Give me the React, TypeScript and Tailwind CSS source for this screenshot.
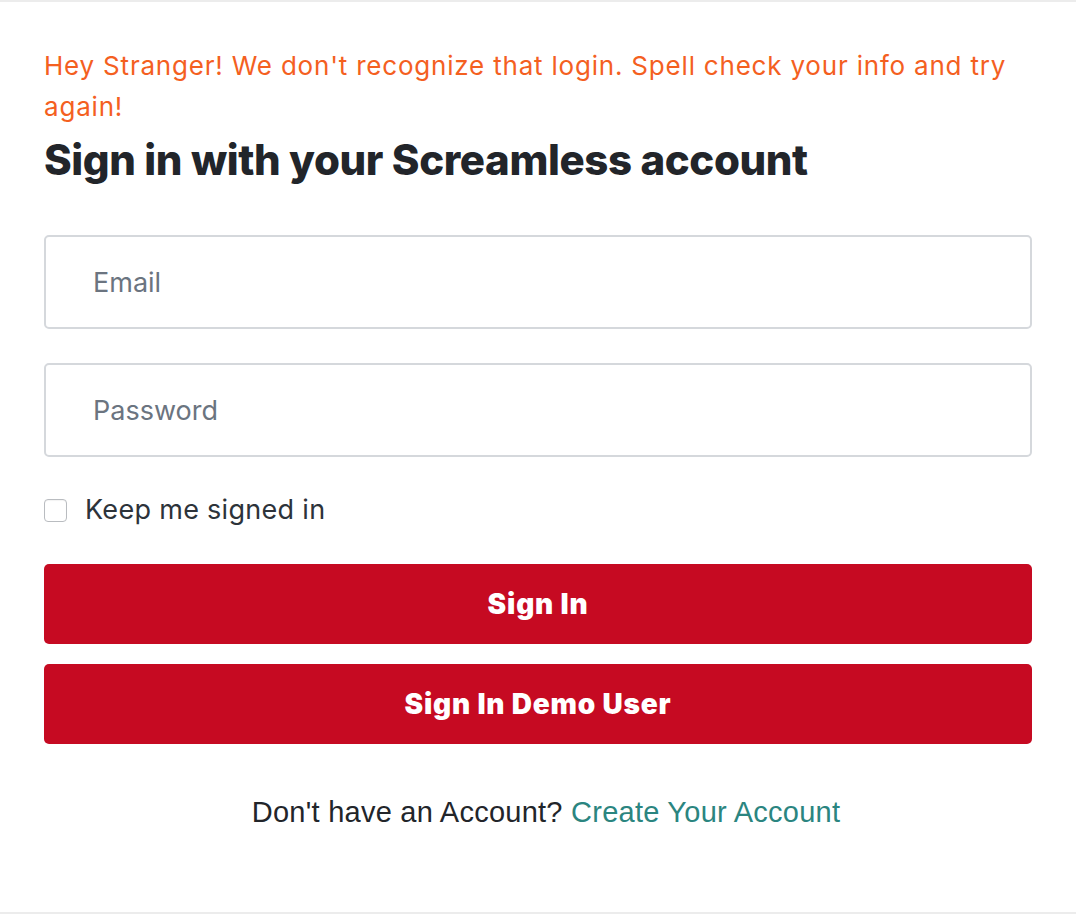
export default function App() {
  return (
    <div className="min-h-[914px] w-full bg-white border-t-2 border-b-2 border-[#ececec] font-['Inter',sans-serif]">
      <div className="px-[44px] pt-[43px] pb-[70px]">
        <p className="text-[26px] leading-[41px] tracking-[0.8px] text-[#f4601f]">
          Hey Stranger! We don't recognize that login. Spell check your info and try again!
        </p>
        <h1 className="text-[42px] leading-[66px] font-extrabold text-[#22252a] tracking-[-0.4px]">
          Sign in with your Screamless account
        </h1>

        <form className="mt-[42px] flex flex-col" onSubmit={(e) => e.preventDefault()}>
          <input
            type="email"
            placeholder="Email"
            className="h-[94px] w-full rounded-[5px] border-2 border-[#d5d8dc] pl-[47px] text-[27px] text-[#2d333a] outline-none placeholder:text-[#6b7480]"
          />
          <input
            type="password"
            placeholder="Password"
            className="mt-[34px] h-[94px] w-full rounded-[5px] border-2 border-[#d5d8dc] pl-[47px] text-[27px] text-[#2d333a] outline-none placeholder:text-[#6b7480]"
          />

          <label className="mt-[36px] flex items-center gap-[18px] h-[34px]">
            <span className="w-[23px] h-[23px] rounded-[4px] border border-[#b9bcc0] bg-white shadow-[inset_0_1px_1px_rgba(0,0,0,0.05)]" />
            <span className="text-[27px] tracking-[0.3px] text-[#2d333a]">Keep me signed in</span>
          </label>

          <button className="mt-[37px] h-[80px] w-full rounded-[5px] bg-[#c60a22] text-white text-[28px] font-black tracking-[0.8px]">
            Sign In
          </button>
          <button className="mt-[20px] h-[80px] w-full rounded-[5px] bg-[#c60a22] text-white text-[28px] font-black tracking-[0.8px]">
            Sign In Demo User
          </button>
        </form>

        <p className="mt-[50px] pl-[16px] text-center text-[29px] leading-[36px] tracking-[0.25px] text-[#22252a] font-['Liberation_Sans',sans-serif]">
          Don't have an Account?{" "}
          <a href="#" className="text-[#2b8580]">Create Your Account</a>
        </p>
      </div>
    </div>
  );
}
